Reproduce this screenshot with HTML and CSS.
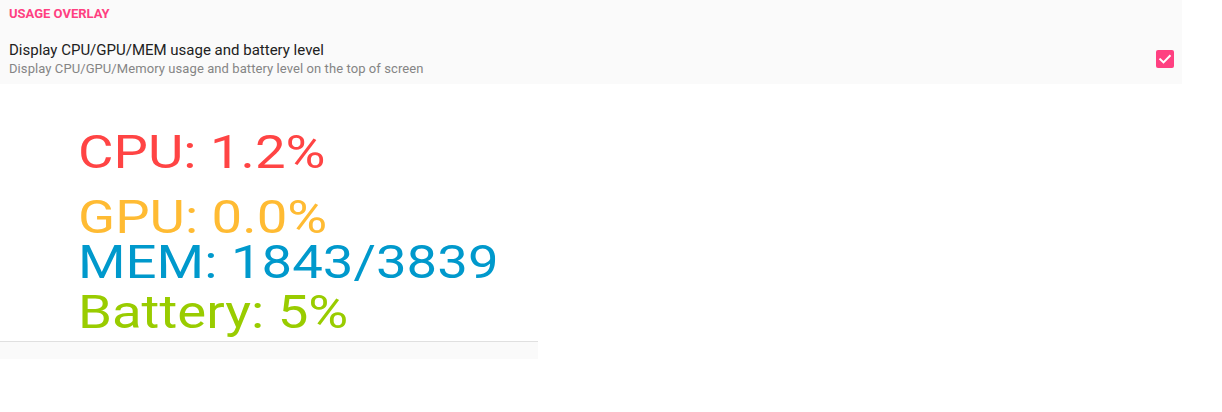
FILE: index.html
```html
<!DOCTYPE html>
<html>
<head>
<meta charset="utf-8">
<link rel="stylesheet" href="styles.css">
</head>
<body>
<div class="panel">
  <div class="category">USAGE OVERLAY</div>
  <div class="pref">
    <div class="pref-text">
      <div class="pref-title">Display CPU/GPU/MEM usage and battery level</div>
      <div class="pref-summary">Display CPU/GPU/Memory usage and battery level on the top of screen</div>
    </div>
    <div class="checkbox">
      <svg width="18" height="18" viewBox="0 0 18 18"><path d="M4.2 9.3 L7.5 12.4 L13.8 5.9" fill="none" stroke="#fff" stroke-width="2" stroke-linecap="square"/></svg>
    </div>
  </div>
</div>
<div class="overlay">
  <div class="stat cpu">CPU: 1.2%</div>
  <div class="stat gpu">GPU: 0.0%</div>
  <div class="stat mem">MEM: 1843/3839</div>
  <div class="stat bat">Battery: 5%</div>
</div>
<div class="footer"></div>
</body>
</html>
```
FILE: styles.css
```css
html, body {
  margin: 0;
  padding: 0;
  background: #ffffff;
  font-family: Roboto, "Liberation Sans", sans-serif;
}
.panel {
  width: 1182px;
  height: 84px;
  box-sizing: border-box;
  background: #fafafa;
  padding: 6px 8px 0 9px;
}
.category {
  font-size: 13px;
  line-height: 16px;
  font-weight: 700;
  color: #ff4081;
}
.pref {
  display: flex;
  align-items: center;
  margin-top: 18px;
}
.pref-text {
  flex: 1;
}
.pref-title {
  font-size: 15px;
  line-height: 20px;
  color: #212121;
}
.pref-summary {
  margin-top: 1px;
  font-size: 13px;
  line-height: 16px;
  color: #858585;
  letter-spacing: 0.08px;
}
.checkbox {
  width: 18px;
  height: 18px;
  border-radius: 2px;
  background: #ff4081;
  display: flex;
}
.overlay {
  padding: 45px 0 0 78px;
  height: 257px;
  box-sizing: border-box;
}
.stat {
  width: max-content;
  font-size: 47px;
  line-height: 45px;
  white-space: nowrap;
  transform: scaleX(1.16);
  transform-origin: left center;
}
.cpu { color: #ff4444; }
.gpu { color: #ffbb33; margin-top: 20px; }
.mem { color: #0099cc; }
.bat { color: #99cc00; margin-top: 5px; }
.footer {
  width: 538px;
  height: 17px;
  border-top: 1px solid #e0e0e0;
  background: #fafafa;
}
```
